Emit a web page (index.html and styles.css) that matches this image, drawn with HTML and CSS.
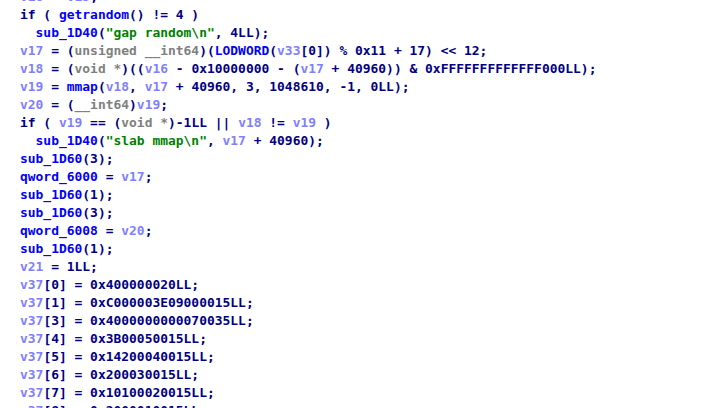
FILE: index.html
```html
<!DOCTYPE html>
<html>
<head>
<meta charset="utf-8">
<link rel="stylesheet" href="styles.css">
</head>
<body>
<div class="code">
<div class="ln"><span class="v">v16</span> = <span class="v">v15</span>;</div>
<div class="ln">if ( <span class="f">getrandom</span>() != 4 )</div>
<div class="ln">  <span class="f">sub_1D40</span>(<span class="s">"gap random\n"</span>, 4LL);</div>
<div class="ln"><span class="v">v17</span> = (<span class="t">unsigned __int64</span>)(<span class="f">LODWORD</span>(<span class="v">v33</span>[0]) % 0x11 + 17) &lt;&lt; 12;</div>
<div class="ln"><span class="v">v18</span> = (<span class="t">void *</span>)((<span class="v">v16</span> - 0x10000000 - (<span class="v">v17</span> + 40960)) &amp; 0xFFFFFFFFFFFFF000LL);</div>
<div class="ln"><span class="v">v19</span> = <span class="f">mmap</span>(<span class="v">v18</span>, <span class="v">v17</span> + 40960, 3, 1048610, -1, 0LL);</div>
<div class="ln"><span class="v">v20</span> = (<span class="t">__int64</span>)<span class="v">v19</span>;</div>
<div class="ln">if ( <span class="v">v19</span> == (<span class="t">void *</span>)-1LL || <span class="v">v18</span> != <span class="v">v19</span> )</div>
<div class="ln">  <span class="f">sub_1D40</span>(<span class="s">"slab mmap\n"</span>, <span class="v">v17</span> + 40960);</div>
<div class="ln"><span class="f">sub_1D60</span>(3);</div>
<div class="ln"><span class="f">qword_6000</span> = <span class="v">v17</span>;</div>
<div class="ln"><span class="f">sub_1D60</span>(1);</div>
<div class="ln"><span class="f">sub_1D60</span>(3);</div>
<div class="ln"><span class="f">qword_6008</span> = <span class="v">v20</span>;</div>
<div class="ln"><span class="f">sub_1D60</span>(1);</div>
<div class="ln"><span class="v">v21</span> = 1LL;</div>
<div class="ln"><span class="v">v37</span>[0] = 0x400000020LL;</div>
<div class="ln"><span class="v">v37</span>[1] = 0xC000003E09000015LL;</div>
<div class="ln"><span class="v">v37</span>[3] = 0x4000000000070035LL;</div>
<div class="ln"><span class="v">v37</span>[4] = 0x3B00050015LL;</div>
<div class="ln"><span class="v">v37</span>[5] = 0x14200040015LL;</div>
<div class="ln"><span class="v">v37</span>[6] = 0x200030015LL;</div>
<div class="ln"><span class="v">v37</span>[7] = 0x10100020015LL;</div>
<div class="ln"><span class="v">v37</span>[8] = 0x2000010015LL;</div>
</div>
</body>
</html>
```
FILE: styles.css
```css
html, body {
  margin: 0;
  padding: 0;
  background: #ffffff;
  overflow: hidden;
}
.code {
  margin-top: -12px;
  padding-left: 20px;
  font-family: "DejaVu Sans Mono", monospace;
  font-weight: bold;
  font-size: 12.95px;
  line-height: 18px;
  color: #000080;
}
.ln {
  white-space: pre;
  height: 18px;
}
.v { color: #8080ff; }
.f { color: #0000ff; }
.s { color: #008000; }
.t { color: #808080; }
```
